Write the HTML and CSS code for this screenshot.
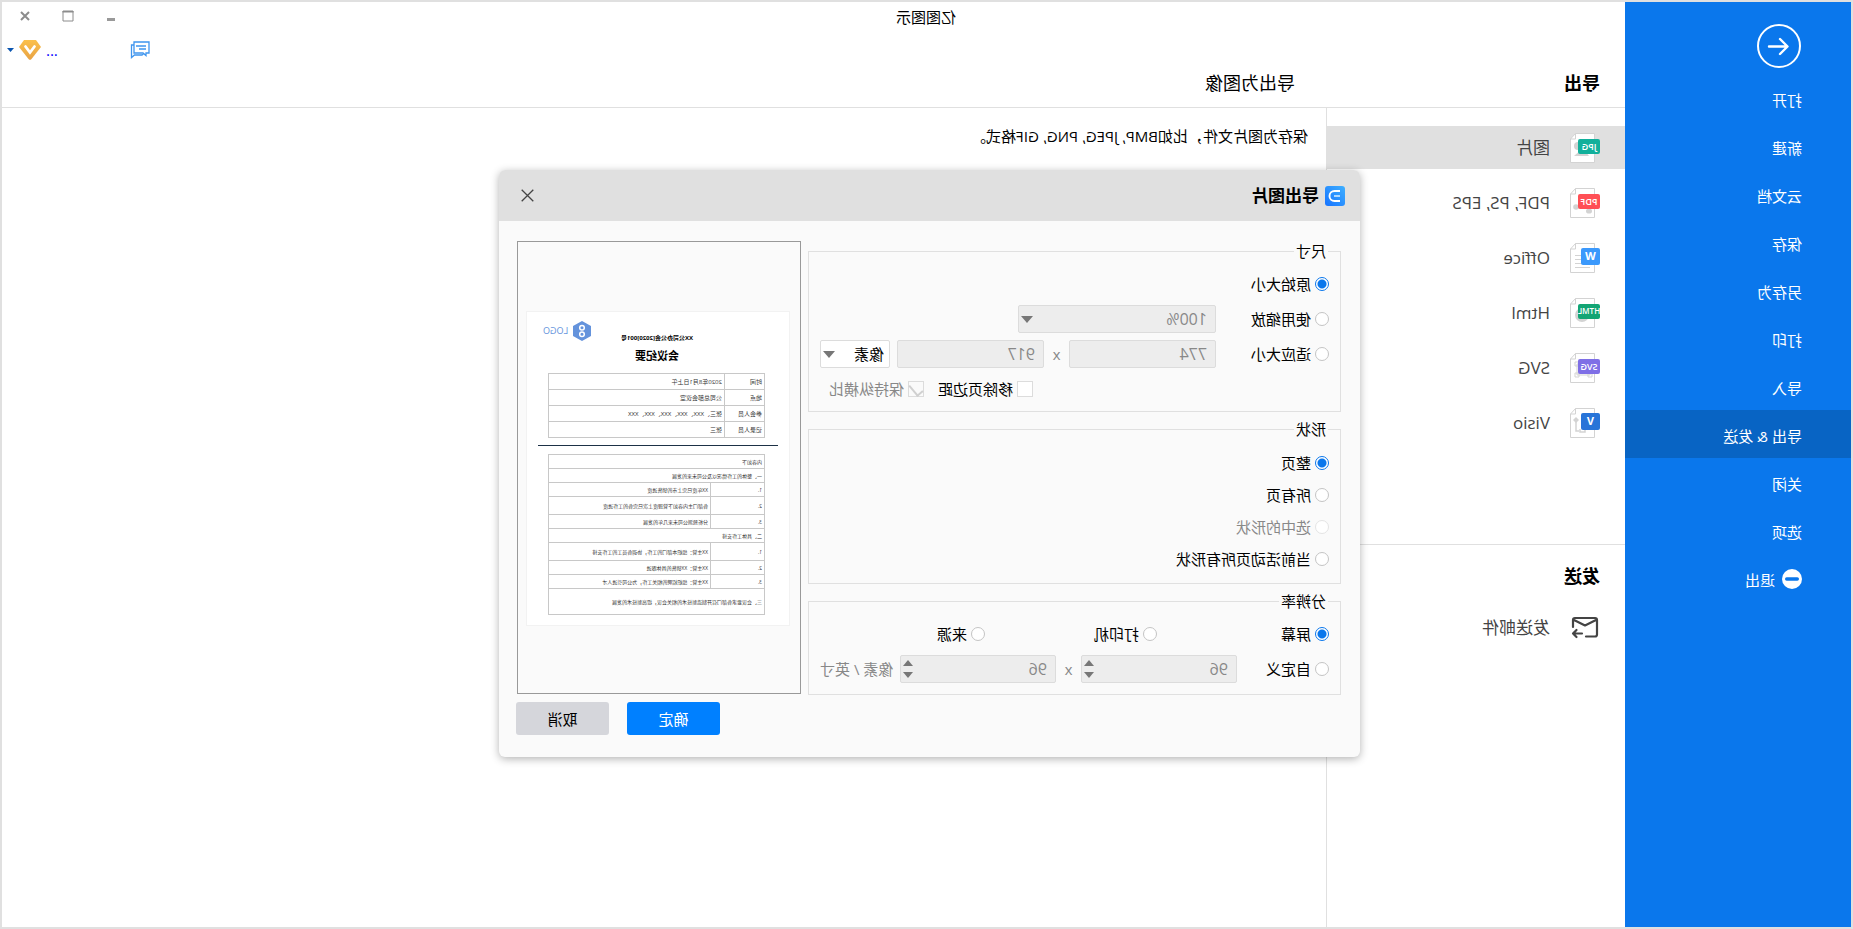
FILE: index.html
```html
<!DOCTYPE html>
<html lang="zh-CN">
<head>
<meta charset="utf-8">
<title>亿图图示</title>
<link rel="stylesheet" href="styles.css">
</head>
<body>
<div class="app">
  <nav class="sidebar">
    <button class="back" type="button" aria-label="返回">
      <svg width="44" height="44" viewBox="0 0 44 44" fill="none" stroke="#fff" stroke-width="2"><circle cx="22" cy="22" r="21"/><path d="M32 22.500H14M21 15l-7.500 7.500L21 30" stroke-width="2.400" stroke-linecap="round" stroke-linejoin="round"/></svg>
    </button>
    <a class="menu-item" href="#">打开</a>
    <a class="menu-item" href="#">新建</a>
    <a class="menu-item" href="#">云文档</a>
    <a class="menu-item" href="#">保存</a>
    <a class="menu-item" href="#">另存为</a>
    <a class="menu-item" href="#">打印</a>
    <a class="menu-item" href="#">导入</a>
    <a class="menu-item active" href="#">导出 &amp; 发送</a>
    <a class="menu-item" href="#">关闭</a>
    <a class="menu-item" href="#">选项</a>
    <a class="menu-item" href="#"><svg class="exit-icon" width="20" height="20" viewBox="0 0 20 20"><circle cx="10" cy="10" r="10" fill="#fff"/><rect x="3" y="8.300" width="14" height="3.400" rx="1.700" fill="#0a77ec"/></svg>退出</a>
  </nav>

  <div class="workspace">
    <header class="topbar">
      <div class="titlebar">
        <h1 class="app-title">亿图图示</h1>
        <div class="window-buttons">
          <button type="button" aria-label="最小化"><svg width="12" height="12" viewBox="0 0 12 12"><rect x="2" y="8" width="8" height="3" fill="#999"/></svg></button>
          <button type="button" aria-label="最大化"><svg width="12" height="12" viewBox="0 0 12 12"><path d="M1 1h10v10H1z" fill="none" stroke="#8c8c8c"/><path d="M.5 1h11v1.500H.5z" fill="#8c8c8c"/></svg></button>
          <button type="button" aria-label="关闭窗口"><svg width="12" height="12" viewBox="0 0 12 12"><path d="M2 2l8 8M10 2l-8 8" stroke="#8c8c8c" stroke-width="2"/></svg></button>
        </div>
      </div>
      <div class="account">
        <button type="button" aria-label="消息"><svg width="20" height="18" viewBox="0 0 20 18" fill="none" stroke="#3f95ee" stroke-width="1.300"><path d="M1 1h15v11h-9l-3 2.500V12H1z"/><path d="M16 4h2.500v12.500L15.500 14H8l-1.500-1M4 5h10M4 8h7"/></svg></button>
        <button class="user" type="button" aria-label="账户"><span>...</span>
          <svg width="22" height="20" viewBox="0 0 22 20"><defs><linearGradient id="gem" x1="0" y1="0" x2="0" y2="1"><stop offset="0" stop-color="#fbc04c"/><stop offset="1" stop-color="#e8a344"/></linearGradient></defs><path d="M5 0h12l5 7-9.500 12a2 2 0 0 1-3 0L0 7z" fill="url(#gem)"/><path d="M6.500 6.500l4.500 6 4.500-6" fill="none" stroke="#fff" stroke-width="2.800" stroke-linecap="round"/></svg>
          <svg width="7" height="4" viewBox="0 0 7 4"><path d="M0 0h7L3.500 4z" fill="#0a55b0"/></svg>
        </button>
      </div>
      <div class="headings">
        <h2 class="section-title">导出</h2>
        <h2 class="page-title">导出为图像</h2>
      </div>
    </header>

    <div class="columns">
      <aside class="formats">
        <ul class="format-list">
          <li><a class="format active" href="#"><svg width="30" height="30" viewBox="0 0 30 30"><use href="#sheet"/><path d="M11 23l6-8 9 8z" fill="#d3d3d3"/><circle cx="22" cy="13" r="4" fill="#d3d3d3"/><rect y="6" width="22" height="15" rx="2" fill="#12b09b"/><text class="badge" x="11" y="17">JPG</text></svg>图片</a></li>
          <li><a class="format" href="#"><svg width="30" height="30" viewBox="0 0 30 30"><use href="#sheet"/><circle cx="24" cy="19" r="2.800" fill="#d3d3d3"/><ellipse cx="11" cy="23" rx="3" ry="2.600" fill="#d3d3d3"/><rect y="6" width="22" height="15" rx="2" fill="#ff4f55"/><text class="badge" x="11" y="17">PDF</text></svg>PDF, PS, EPS</a></li>
          <li><a class="format" href="#"><svg width="30" height="30" viewBox="0 0 30 30"><use href="#sheet"/><path d="M10 8.500h8M10 12.500h15M10 16.500h15M10 20.500h15M10 24.500h15" stroke="#d3d3d3"/><rect y="5" width="19" height="17" rx="2" fill="#3b99fc"/><text class="badge letter" x="9.500" y="17">W</text></svg>Office</a></li>
          <li><a class="format" href="#"><svg width="30" height="30" viewBox="0 0 30 30"><use href="#sheet"/><circle cx="18" cy="17" r="7" fill="#d3d3d3"/><rect y="6" width="22" height="15" rx="2" fill="#12a574"/><text class="badge small" x="11" y="16">HTML</text></svg>Html</a></li>
          <li><a class="format" href="#"><svg width="30" height="30" viewBox="0 0 30 30"><use href="#sheet"/><path d="M10 11h13v11H10zM21 9h4v4h-4zM21 20h4v4h-4zM8 20h4v4H8z" fill="#fff" stroke="#d3d3d3"/><rect y="6" width="22" height="15" rx="2" fill="#7f6fe6"/><text class="badge" x="11" y="17">SVG</text></svg>SVG</a></li>
          <li><a class="format" href="#"><svg width="30" height="30" viewBox="0 0 30 30"><use href="#sheet"/><path d="M24 9l3 3-3 3-3-3z" fill="#d3d3d3"/><path d="M24 14v9h-3M15 20v4h5v-3" fill="none" stroke="#d3d3d3" stroke-width="1.500"/><rect y="5" width="19" height="17" rx="2" fill="#2874d8"/><text class="badge letter" x="9.500" y="17">V</text></svg>Visio</a></li>
        </ul>
        <section class="send">
          <h2 class="section-title">发送</h2>
          <a class="format" href="#"><svg width="30" height="30" viewBox="0 0 30 30" fill="none" stroke="#444" stroke-width="2.200" stroke-linejoin="round" stroke-linecap="round"><path d="M14 23.500H5a2 2 0 0 1-2-2V7a2 2 0 0 1 2-2h20a2 2 0 0 1 2 2v7M4 7l11 5.500L26 7M18 20.500h9M23.500 17l3.500 3.500-3.500 3.500"/></svg>发送邮件</a>
        </section>
      </aside>
      <main class="content">
        <p>保存为图片文件，比如BMP, JPEG, PNG, GIF格式。</p>
      </main>
    </div>
  </div>

  <section class="dialog" role="dialog" aria-labelledby="dialog-title">
    <header class="dialog-head">
      <svg width="20" height="20" viewBox="0 0 20 20"><defs><linearGradient id="brand" x1="0" y1="0" x2="1" y2="1"><stop offset="0" stop-color="#3fb0ff"/><stop offset="1" stop-color="#1673ff"/></linearGradient></defs><rect width="20" height="20" rx="3" fill="url(#brand)"/><path d="M5 5h5.500a5 5 0 0 1 0 10H5" fill="none" stroke="#fff" stroke-width="1.900"/><path d="M5 10h6" stroke="#b9deff" stroke-width="1.900"/></svg>
      <h2 id="dialog-title">导出图片</h2>
      <button class="close" type="button" aria-label="关闭"><svg width="13" height="13" viewBox="0 0 13 13"><path d="M.7.700l11.600 11.600M12.300.700L.7 12.300" stroke="#444" stroke-width="1.300"/></svg></button>
    </header>
    <form class="dialog-body">
      <div class="settings">
        <fieldset class="group">
          <legend>尺寸</legend>
          <div class="row"><label class="choice lead"><input type="radio" name="size" checked>原始大小</label></div>
          <div class="row"><label class="choice lead"><input type="radio" name="size">使用缩放</label>
            <span class="select scale"><select disabled aria-label="缩放比例"><option>100%</option></select></span></div>
          <div class="row"><label class="choice lead"><input type="radio" name="size">适应大小</label>
            <input class="field" type="text" value="774" disabled aria-label="宽度"><span class="times">x</span><input class="field" type="text" value="917" disabled aria-label="高度">
            <span class="select unit"><select aria-label="单位"><option>像素</option></select></span></div>
          <div class="row checks"><label class="choice"><input type="checkbox">移除页边距</label><label class="choice off"><input type="checkbox" checked disabled>保持纵横比</label></div>
        </fieldset>
        <fieldset class="group shapes">
          <legend>形状</legend>
          <label class="choice"><input type="radio" name="shape" checked>整页</label>
          <label class="choice"><input type="radio" name="shape">所有页</label>
          <label class="choice off"><input type="radio" name="shape" disabled>选中的形状</label>
          <label class="choice"><input type="radio" name="shape">当前活动页所有形状</label>
        </fieldset>
        <fieldset class="group resolution">
          <legend>分辨率</legend>
          <div class="row thirds"><label class="choice"><input type="radio" name="dpi" checked>屏幕</label><label class="choice"><input type="radio" name="dpi">打印机</label><label class="choice"><input type="radio" name="dpi">来源</label></div>
          <div class="row"><label class="choice lead"><input type="radio" name="dpi">自定义</label>
            <span class="spin"><input class="field" type="text" value="96" disabled aria-label="横向分辨率"></span><span class="times">x</span><span class="spin"><input class="field" type="text" value="96" disabled aria-label="纵向分辨率"></span>
            <span class="unit-label">像素 / 英寸</span></div>
        </fieldset>
      </div>
      <div class="side">
        <div class="preview">
          <article class="doc">
            <div class="doc-logo"><svg width="18" height="20" viewBox="0 0 18 20"><path d="M9 0l9 5v10l-9 5-9-5V5z" fill="#6493dc"/><g fill="none" stroke="#fff" stroke-width="1.500"><circle cx="9" cy="6.700" r="2.300"/><circle cx="9" cy="13.300" r="2.300"/></g></svg>LOGO</div>
            <p class="doc-number">XX公司办公会[2020]001号</p>
            <h3 class="doc-title">会议纪要</h3>
            <table class="doc-table meta">
              <tr><th>时间</th><td>2020年8月1日上午</td></tr>
              <tr><th>地点</th><td>公司总部会议室</td></tr>
              <tr><th>参会人员</th><td>张三、XXX、XXX、XXX、XXX、XXX</td></tr>
              <tr><th>记录人员</th><td>张三</td></tr>
            </table>
            <hr class="doc-rule">
            <table class="doc-table agenda">
              <tr><td colspan="2">内容如下</td></tr>
              <tr><td colspan="2">一、整体的工作情况以及公司未来的发展</td></tr>
              <tr><th>1.</th><td>XX年度已完上市的销售进度</td></tr>
              <tr class="tall"><th>2.</th><td>各部门主内容如下管理度上次已完各的工作进度</td></tr>
              <tr><th>3.</th><td>分析预测公司未来几年的发展</td></tr>
              <tr><td colspan="2">二、具体工作安排</td></tr>
              <tr class="tall"><th>1.</th><td>XX主管：组织本部门的工作，协调各员工的工作安排</td></tr>
              <tr><th>2.</th><td>XX主管：XX销售的具体跟进</td></tr>
              <tr><th>3.</th><td>XX主管：组织招聘的相关工作，为公司引进人才</td></tr>
              <tr class="last"><td colspan="2">三、会议要求各部门召开制造新技术的相关会议，提高新技术的发展</td></tr>
            </table>
          </article>
        </div>
        <div class="actions"><button class="btn primary" type="button">确定</button><button class="btn" type="button">取消</button></div>
      </div>
    </form>
  </section>
</div>
<svg class="defs" width="0" height="0" aria-hidden="true"><symbol id="sheet" viewBox="0 0 30 30"><path d="M5.500.500h19l5 5.500v23.500h-24z" fill="#fff" stroke="#d3d3d3"/><path d="M24.500.500V6h5" fill="none" stroke="#d3d3d3"/></symbol></svg>
</body>
</html>
```
FILE: styles.css
```css
* { box-sizing: border-box; }

body {
  margin: 0;
  color: #000;
  font: 15px/20px "Open Sans", "Noto Sans CJK SC", sans-serif;
}

h1, h2, h3, p, ul { margin: 0; padding: 0; font-weight: 400; }
ul { list-style: none; }
a { color: inherit; text-decoration: none; }
button { padding: 0; border: 0; background: none; font: inherit; color: inherit; }
svg { display: block; flex: none; }
.defs { position: absolute; }

/* The whole window is shown mirrored. */
.app {
  position: relative;
  display: flex;
  min-height: 100vh;
  border: 2px solid #e0e0e0;
  background: #fff;
  transform: scaleX(-1);
}

/* Sidebar */
.sidebar { flex: none; width: 226px; padding-top: 22px; background: #0a77ec; color: #fff; }
.back { display: block; margin: 0 0 6px 50px; }
.menu-item {
  display: flex;
  align-items: center;
  gap: 7px;
  height: 48px;
  padding: 3px 0 0 49px;
}
.menu-item.active { background: #0864c4; }
.exit-icon { margin-top: -2px; }

/* Header */
.workspace { flex: 1; display: flex; flex-direction: column; }
.topbar { border-bottom: 1px solid #e0e0e0; }
.titlebar { display: flex; height: 27px; align-items: center; justify-content: flex-end; }
.app-title { flex: 1; padding: 3px 110px 0 0; text-align: center; font-size: 15px; }
.window-buttons { display: flex; gap: 31px; padding-right: 17px; }
.account { display: flex; justify-content: flex-end; align-items: center; gap: 72px; height: 42px; padding-right: 5px; }
.user { display: flex; align-items: center; gap: 5px; color: #00f; }
.headings { display: flex; height: 36px; padding-left: 25px; line-height: 24px; }
.section-title { width: 305px; font-size: 18px; font-weight: 700; }
.page-title { font-size: 18px; }

/* Columns */
.columns { flex: 1; display: flex; }
.formats { flex: none; width: 299px; border-right: 1px solid #e0e0e0; }
.format-list { display: grid; gap: 12px; padding: 18px 0 100px; }
.format {
  display: flex;
  align-items: center;
  gap: 20px;
  height: 43px;
  padding-left: 25px;
  color: #444;
  font-size: 17px;
}
.format.active { background: #e0e0e0; }
.badge { fill: #fff; font: 600 9px "Open Sans", sans-serif; text-anchor: middle; }
.badge.letter { font-size: 11px; font-weight: 700; }
.badge.small { font-size: 8px; }
.send { border-top: 1px solid #e0e0e0; padding-top: 16px; }
.send .section-title { width: auto; padding-left: 25px; line-height: 30px; }
.send .format { margin-top: 15px; }
.content { flex: 1; padding: 17px 18px; line-height: 22px; }

/* Dialog */
.dialog {
  position: absolute;
  left: 491px;
  top: 168px;
  width: 861px;
  border-radius: 6px;
  background: #fafafa;
  box-shadow: 0 2px 8px rgba(0, 0, 0, .3);
}
.dialog-head {
  display: flex;
  align-items: center;
  gap: 6px;
  height: 51px;
  padding: 0 22px 0 15px;
  border-radius: 6px 6px 0 0;
  background: #e0e0e0;
}
.dialog-head h2 { flex: 1; font-size: 17px; font-weight: 700; }
.dialog-body { display: flex; gap: 7px; padding: 20px 17px 22px 19px; }
.settings { flex: 1; display: flex; flex-direction: column; gap: 7px; padding-bottom: 40px; }

.group { min-width: 0; margin: 0; padding: 9px 11px 8px; border: 1px solid #e0e0e0; }
.group legend { margin-left: 1px; padding: 0 2px; }
.row { display: flex; align-items: center; height: 28px; }
.row + .row { margin-top: 7px; }
.shapes { display: grid; gap: 8px; padding: 12px 11px; }
.resolution { padding-bottom: 11px; }
.resolution .lead { width: 92px; }
.thirds { display: grid; grid-template-columns: 172px 172px auto; }
.checks { justify-content: flex-end; gap: 14px; padding-right: 9px; }

.choice { display: flex; align-items: center; gap: 4px; height: 24px; white-space: nowrap; }
.lead { width: 113px; }
.off { color: #888; }
.choice input { appearance: none; flex: none; margin: 0; background: #fff; }
.choice input[type="radio"] { width: 14px; height: 14px; border: 1px solid #c4c4c4; border-radius: 50%; }
.choice input[type="radio"]:checked {
  border-color: #0a77ec;
  background: radial-gradient(circle, #0a77ec 4px, #fff 5px);
}
.choice input[type="radio"]:disabled { border-color: #e4e4e4; }
.choice input[type="checkbox"] { width: 16px; height: 16px; border: 1px solid #dcdcdc; }
.choice input[type="checkbox"]:checked {
  display: grid;
  place-items: start center;
  background: #fafafa;
}
.choice input[type="checkbox"]:checked::before {
  content: "";
  width: 6px;
  height: 12px;
  border: solid #d0d0d0;
  border-width: 0 2px 2px 0;
  transform: rotate(40deg);
}

.field, .select select {
  width: 147px;
  height: 28px;
  padding: 0 8px;
  border: 1px solid #dcdcdc;
  border-radius: 2px;
  background: #ededed;
  color: #888;
  font: inherit;
  font-size: 16px;
}
.select, .spin { position: relative; display: block; }
.select select { appearance: none; width: 100%; opacity: 1; }
.select::after {
  content: "";
  position: absolute;
  top: 11px;
  right: 3px;
  border: solid transparent;
  border-width: 7px 6px 0;
  border-top-color: #777;
}
.scale { width: 198px; }
.unit { width: 70px; margin-left: 7px; }
.select.unit select { padding: 0 5px; background: #fff; color: #000; font-size: 15px; }
.times { width: 25px; text-align: center; color: #888; }
.spin .field { display: block; width: 156px; }
.spin::before, .spin::after { content: ""; position: absolute; right: 3px; border: solid transparent; }
.spin::before { top: 5px; border-width: 0 5px 6px; border-bottom-color: #777; }
.spin::after { bottom: 5px; border-width: 6px 5px 0; border-top-color: #777; }
.unit-label { flex: 1; text-align: right; color: #888; white-space: nowrap; }

/* Preview */
.side { width: 285px; }
.preview { height: 453px; margin-right: 1px; padding: 69px 8px 69px 10px; border: 1px solid #999; }
.actions { display: flex; justify-content: flex-end; gap: 18px; margin-top: 8px; }
.btn { width: 93px; height: 33px; border-radius: 3px; background: #d5d6db; }
.btn.primary { background: #0080ff; color: #fff; }

.doc { position: relative; height: 315px; padding: 22px 22px 0 24px; border: 1px solid #f2f2f2; background: #fff; font-size: 6px; line-height: 8px; }
.doc-logo { position: absolute; top: 9px; right: 16px; display: flex; align-items: center; gap: 5px; color: #6493dc; font-size: 9px; }
.doc-number { text-align: center; font-weight: 700; font-size: 6px; }
.doc-title { margin: 6px 0 9px; text-align: center; font-weight: 700; font-size: 11px; line-height: 16px; }
.doc-table { width: 217px; border-collapse: collapse; table-layout: fixed; font-size: 5px; line-height: 8px; color: #333; }
.doc-table th, .doc-table td { padding: 0 2px; border: 1px solid #c8c8c8; font-weight: 400; text-align: left; white-space: nowrap; }
.meta { font-size: 6px; }
.meta tr { height: 16px; }
.meta th { width: 40px; }
.doc-rule { margin: 7px -11px 8px -13px; border: 0; border-top: 1px solid #1d3146; }
.agenda { table-layout: auto; }
.agenda tr { height: 14px; }
.agenda th { width: 54px; }
.agenda .tall { height: 18px; }
.agenda .last { height: 26px; }
```
